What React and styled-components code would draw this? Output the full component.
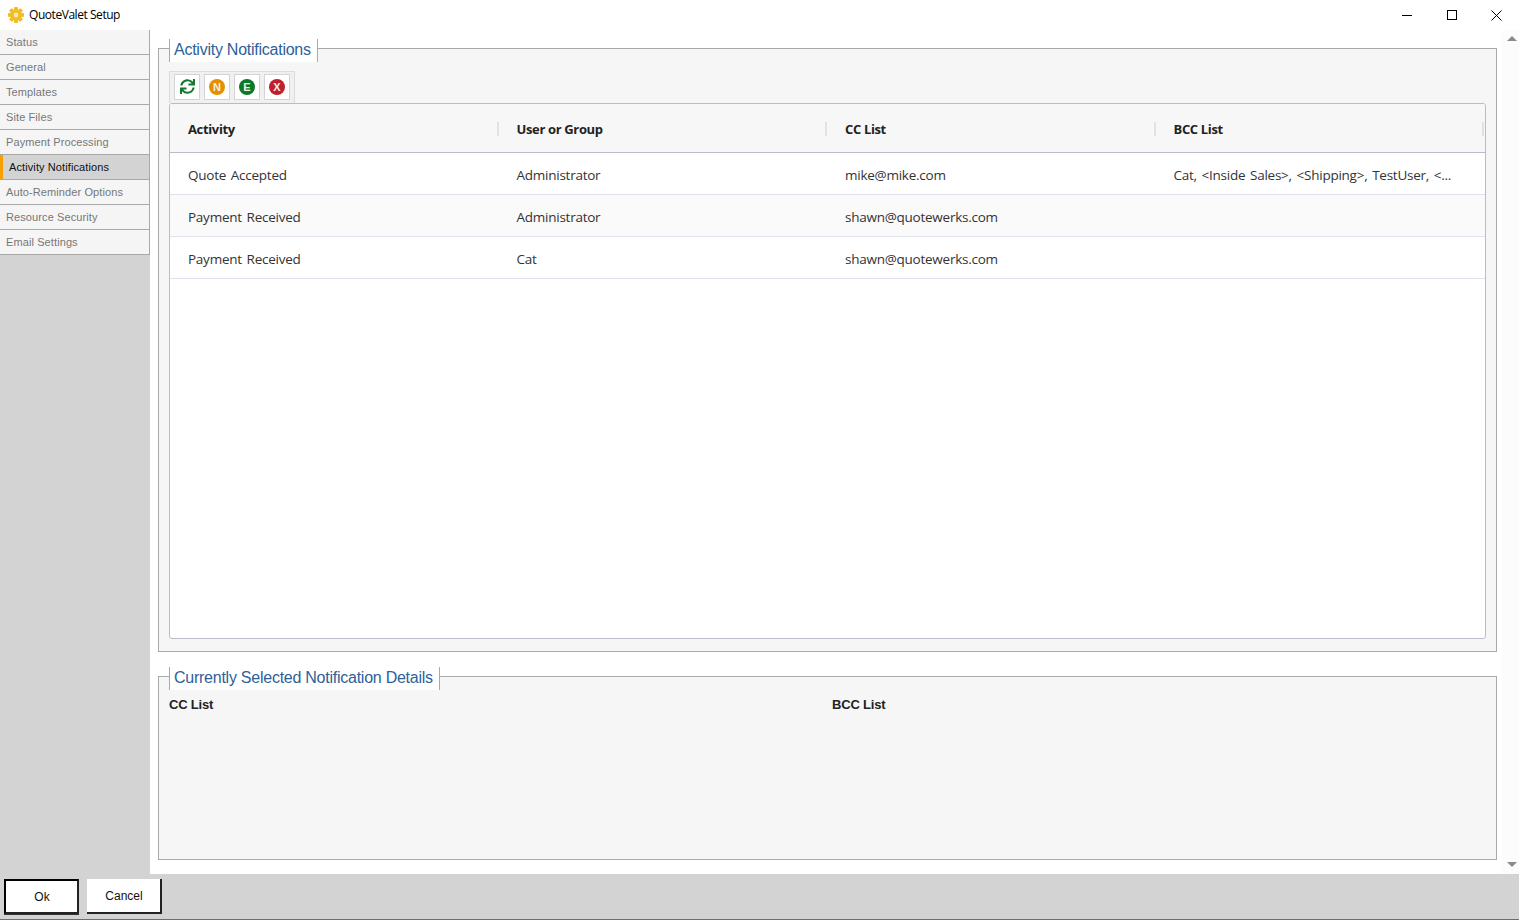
import React from "react";
import styled, { createGlobalStyle } from "styled-components";
import { FaSync } from "react-icons/fa";

const Global = createGlobalStyle`
  html, body { margin: 0; padding: 0; height: 100%; overflow: hidden; background: #fff; }
  * { box-sizing: border-box; }
`;
const Window = styled.div`
  width: 1519px; height: 920px; display: flex; flex-direction: column; background: #fff;
`;
const TitleBar = styled.div`
  height: 30px; flex: none; display: flex; align-items: center; padding-left: 8px; background: #fff;
`;
const TitleText = styled.span`
  font: 12px "Open Sans", "Noto Sans", sans-serif; color: #000; margin-left: 5px; letter-spacing: -0.45px; position: relative; top: -1px;
`;
const WinControls = styled.div`
  margin-left: auto; display: flex; align-items: center; height: 30px;
`;
const WinBtn = styled.button`
  width: 45px; height: 30px; border: 0; background: none; padding: 0; display: flex; align-items: center; justify-content: center;
`;
const Body = styled.div`
  flex: 1; min-height: 0; display: flex;
`;
const Sidebar = styled.nav`
  width: 150px; flex: none; background: #d3d3d3; display: flex; flex-direction: column;
`;
const NavItem = styled.div`
  height: 25px; display: flex; align-items: center; padding-left: 6px;
  font: 11px "Liberation Sans", Arial, sans-serif; letter-spacing: 0.1px;
  color: ${p => (p.$active ? "#111" : "#777")};
  background: ${p => (p.$active ? "#d3d3d3" : "#f5f5f5")};
  border-bottom: 1px solid #a9a9a9; border-right: 1px solid #a9a9a9;
  border-left: ${p => (p.$active ? "3px solid #f5a000" : "0")};
`;
const Main = styled.main`
  flex: 1; min-width: 0; display: flex; background: #fff;
`;
const Content = styled.div`
  flex: 1; min-width: 0; display: flex; flex-direction: column; padding: 18px 5px 14px 8px; gap: 24px;
`;
const Scrollbar = styled.div`
  width: 17px; flex: none; background: #fcfcfc; display: flex; flex-direction: column; justify-content: space-between; align-items: center; padding: 6px 0 7px 2px;
`;
const Arrow = styled.span`
  width: 0; height: 0; border-left: 5px solid transparent; border-right: 5px solid transparent;
  ${p => (p.$down ? "border-top: 5px solid #8a8a8a;" : "border-bottom: 5px solid #8a8a8a;")}
`;
const Panel = styled.section`
  position: relative; background: #f6f6f6; border: 1px solid #a9a9a9; padding: 22px 10px 12px 10px;
  ${p => (p.$grow ? "height: 604px;" : "height: 184px;")}
  display: flex; flex-direction: column;
`;
const Legend = styled.h2`
  position: absolute; left: 10px; top: -10px; height: 23px; margin: 0; padding: 0 6px 2px 4px; display: flex; align-items: center;
  background: #fff; border-left: 1px solid #a9a9a9; border-right: 1px solid #a9a9a9; border-bottom: 0;
  font: 400 16px "Liberation Sans", Arial, sans-serif; color: #2f5f98; white-space: nowrap; line-height: 22px;
  letter-spacing: -0.25px;
`;
const Toolbar = styled.div`
  align-self: flex-start; height: 32px; width: 126px; display: flex; align-items: center; gap: 4px; padding: 0 4px 2px; background: #f0f0f0; border: 1px solid #dcdcdc; border-bottom: 0;
`;
const ToolBtn = styled.button`
  width: 26px; height: 26px; flex: none; padding: 0; background: #fff; border: 1px solid #d4d4d4; display: flex; align-items: center; justify-content: center; color: #117a2c;
`;
const Badge = styled.span`
  width: 16px; height: 16px; border-radius: 50%; background: ${p => p.$c}; color: #f6f0e6; display: flex; align-items: center; justify-content: center;
  font: 700 11px "Liberation Sans", Arial, sans-serif;
`;
const Table = styled.div`
  flex: 1; min-height: 0; background: #fff; border: 1px solid #b9bcc6; border-radius: 3px; display: flex; flex-direction: column; overflow: hidden;
`;
const HeadRow = styled.div`
  height: 49px; flex: none; display: grid; grid-template-columns: repeat(4, 328.5px); background: #f7f7f7; border-bottom: 1px solid #b9bcc6;
`;
const HeadCell = styled.div`
  position: relative; display: flex; align-items: center; padding-left: 18px; padding-top: 1px;
  font: 700 13px "Open Sans", "Noto Sans", sans-serif; color: #222; letter-spacing: -0.35px;
  &::after { content: ""; position: absolute; right: 0; top: 18px; height: 14px; width: 2px; background: #dfe2ea; }
`;
const Row = styled.div`
  height: 42px; flex: none; display: grid; grid-template-columns: repeat(4, 328.5px); background: ${p => (p.$alt ? "#fafafa" : "#fff")}; border-bottom: 1px solid #dfe2ea;
`;
const Cell = styled.div`
  display: flex; align-items: center; padding-left: 18px; padding-top: 2px; min-width: 0;
  font: 400 13.5px "Open Sans", "Noto Sans", sans-serif; color: #333; white-space: nowrap; letter-spacing: -0.25px; word-spacing: 1.5px;
`;
const DetailCols = styled.div`
  display: grid; grid-template-columns: 663px 1fr; margin-top: -2px;
`;
const DetailLabel = styled.div`
  font: 700 13px "Liberation Sans", Arial, sans-serif; letter-spacing: -0.2px; color: #222; line-height: 16px;
`;
const Footer = styled.footer`
  height: 46px; flex: none; background: #d3d3d3; border-bottom: 1px solid #6e6e6e; display: flex; gap: 8px; padding: 5px 0 0 4px; align-items: flex-start;
`;
const Btn = styled.button`
  width: 75px; height: 35px; background: #fff; padding: 0 0 0 1px; font: 12px "Liberation Sans", Arial, sans-serif; color: #111;
  border: ${p => (p.$primary ? "2px solid #000" : "0")};
  border-right: 2px solid #222; border-bottom: 2px solid #222;
  box-shadow: ${p => (p.$primary ? "0 1px 0 #333" : "none")};
`;

const Gear = () => (
  <svg width="16" height="16" viewBox="0 0 16 16">
    <g fill="#f2bd23">
      {[0, 45, 90, 135].map(a => (
        <rect key={a} x="6" y="0" width="4" height="16" rx="1" transform={`rotate(${a} 8 8)`} />
      ))}
      <circle cx="8" cy="8" r="5.5" />
    </g>
    <circle cx="8" cy="8" r="2.4" fill="#fbe9b0" />
  </svg>
);

const nav = ["Status", "General", "Templates", "Site Files", "Payment Processing", "Activity Notifications", "Auto-Reminder Options", "Resource Security", "Email Settings"];
const rows = [
  ["Quote Accepted", "Administrator", "mike@mike.com", "Cat, <Inside Sales>, <Shipping>, TestUser, <..."],
  ["Payment Received", "Administrator", "shawn@quotewerks.com", ""],
  ["Payment Received", "Cat", "shawn@quotewerks.com", ""],
];

export default function App() {
  return (
    <Window>
      <Global />
      <TitleBar>
        <Gear />
        <TitleText>QuoteValet Setup</TitleText>
        <WinControls>
          <WinBtn aria-label="Minimize"><svg width="10" height="10" viewBox="0 0 10 10"><path d="M0 5.5h10" stroke="#000" /></svg></WinBtn>
          <WinBtn aria-label="Maximize"><svg width="10" height="10" viewBox="0 0 10 10"><rect x=".5" y=".5" width="9" height="9" fill="none" stroke="#000" /></svg></WinBtn>
          <WinBtn aria-label="Close"><svg width="11" height="11" viewBox="0 0 11 11"><path d="M.5.5l10 10M10.5.5l-10 10" stroke="#000" /></svg></WinBtn>
        </WinControls>
      </TitleBar>
      <Body>
        <Sidebar>
          {nav.map(n => <NavItem key={n} $active={n === "Activity Notifications"}>{n}</NavItem>)}
        </Sidebar>
        <Main>
          <Content>
            <Panel $grow>
              <Legend>Activity Notifications</Legend>
              <Toolbar>
                <ToolBtn aria-label="Refresh"><FaSync size={15} /></ToolBtn>
                <ToolBtn aria-label="New"><Badge $c="#e49000">N</Badge></ToolBtn>
                <ToolBtn aria-label="Edit"><Badge $c="#0a7a2a">E</Badge></ToolBtn>
                <ToolBtn aria-label="Delete"><Badge $c="#c01f2e">X</Badge></ToolBtn>
              </Toolbar>
              <Table>
                <HeadRow>
                  {["Activity", "User or Group", "CC List", "BCC List"].map(h => <HeadCell key={h}>{h}</HeadCell>)}
                </HeadRow>
                {rows.map((r, i) => (
                  <Row key={i} $alt={i === 1}>
                    {r.map((c, j) => <Cell key={j}>{c}</Cell>)}
                  </Row>
                ))}
              </Table>
            </Panel>
            <Panel>
              <Legend>Currently Selected Notification Details</Legend>
              <DetailCols>
                <DetailLabel>CC List</DetailLabel>
                <DetailLabel>BCC List</DetailLabel>
              </DetailCols>
            </Panel>
          </Content>
          <Scrollbar><Arrow /><Arrow $down /></Scrollbar>
        </Main>
      </Body>
      <Footer>
        <Btn $primary>Ok</Btn>
        <Btn>Cancel</Btn>
      </Footer>
    </Window>
  );
}
